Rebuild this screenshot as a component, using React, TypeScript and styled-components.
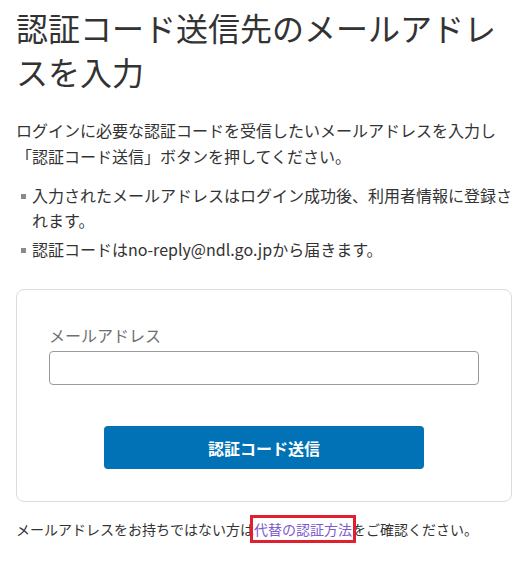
import React from "react";
import styled, { createGlobalStyle } from "styled-components";

const GlobalStyle = createGlobalStyle`
  html, body {
    margin: 0;
    padding: 0;
    background: #fff;
  }
  body {
    font-family: "Noto Sans CJK JP", "Noto Sans", sans-serif;
    color: #333;
  }
`;

function App() {
  return (
    <>
      <GlobalStyle />
      <Page>
        <Title>認証コード送信先のメールアドレスを入力</Title>
        <Lead>
          ログインに必要な認証コードを受信したいメールアドレスを入力し「認証コード送信」ボタンを押してください。
        </Lead>
        <Notes>
          <Note>入力されたメールアドレスはログイン成功後、利用者情報に登録されます。</Note>
          <Note>認証コードはno-reply@ndl.go.jpから届きます。</Note>
        </Notes>
        <Card>
          <Field>
            <Label htmlFor="email">メールアドレス</Label>
            <Input id="email" type="email" />
          </Field>
          <SubmitButton type="button">認証コード送信</SubmitButton>
        </Card>
        <Footer>
          メールアドレスをお持ちではない方は
          <AltLink href="#alt">代替の認証方法</AltLink>
          をご確認ください。
        </Footer>
      </Page>
    </>
  );
}

const Page = styled.div`
  padding: 5px 14px 24px 16px;
`;

const Title = styled.h1`
  margin: 0;
  font-size: 32px;
  font-weight: 400;
  line-height: 44px;
  color: #333;
`;

const Lead = styled.p`
  margin: 24px 0 0;
  font-size: 16px;
  line-height: 26px;
`;

const Notes = styled.ul`
  list-style: none;
  margin: 14px 0 0;
  padding: 0;
`;

const Note = styled.li`
  position: relative;
  padding-left: 16px;
  font-size: 16px;
  line-height: 25px;
  & + & {
    margin-top: 4px;
  }
  &::before {
    content: "";
    position: absolute;
    left: 5px;
    top: 11px;
    width: 5px;
    height: 5px;
    background: #8a8a8a;
  }
`;

const Card = styled.div`
  margin-top: 27px;
  border: 1px solid #dcdcdc;
  border-radius: 8px;
  padding: 32px;
  display: flex;
  flex-direction: column;
  align-items: center;
  gap: 41px;
`;

const Field = styled.div`
  align-self: stretch;
  display: flex;
  flex-direction: column;
  gap: 3px;
`;

const Label = styled.label`
  font-size: 16px;
  line-height: 26px;
  color: #707070;
`;

const Input = styled.input`
  box-sizing: border-box;
  height: 34px;
  width: 100%;
  border: 1px solid #9a9a9a;
  border-radius: 4px;
  padding: 0 10px;
  font: inherit;
  outline: none;
`;

const SubmitButton = styled.button`
  width: 320px;
  height: 43px;
  border: none;
  border-radius: 4px;
  background: #0072b5;
  color: #fff;
  font-family: inherit;
  font-size: 16px;
  font-weight: 700;
  cursor: pointer;
`;

const Footer = styled.p`
  margin: 14px 0 0;
  font-size: 14px;
  line-height: 26px;
`;

const AltLink = styled.a`
  color: #7a5ccc;
  text-decoration: none;
  outline: 3px solid #e0202e;
  outline-offset: 1px;
`;

export default App;
